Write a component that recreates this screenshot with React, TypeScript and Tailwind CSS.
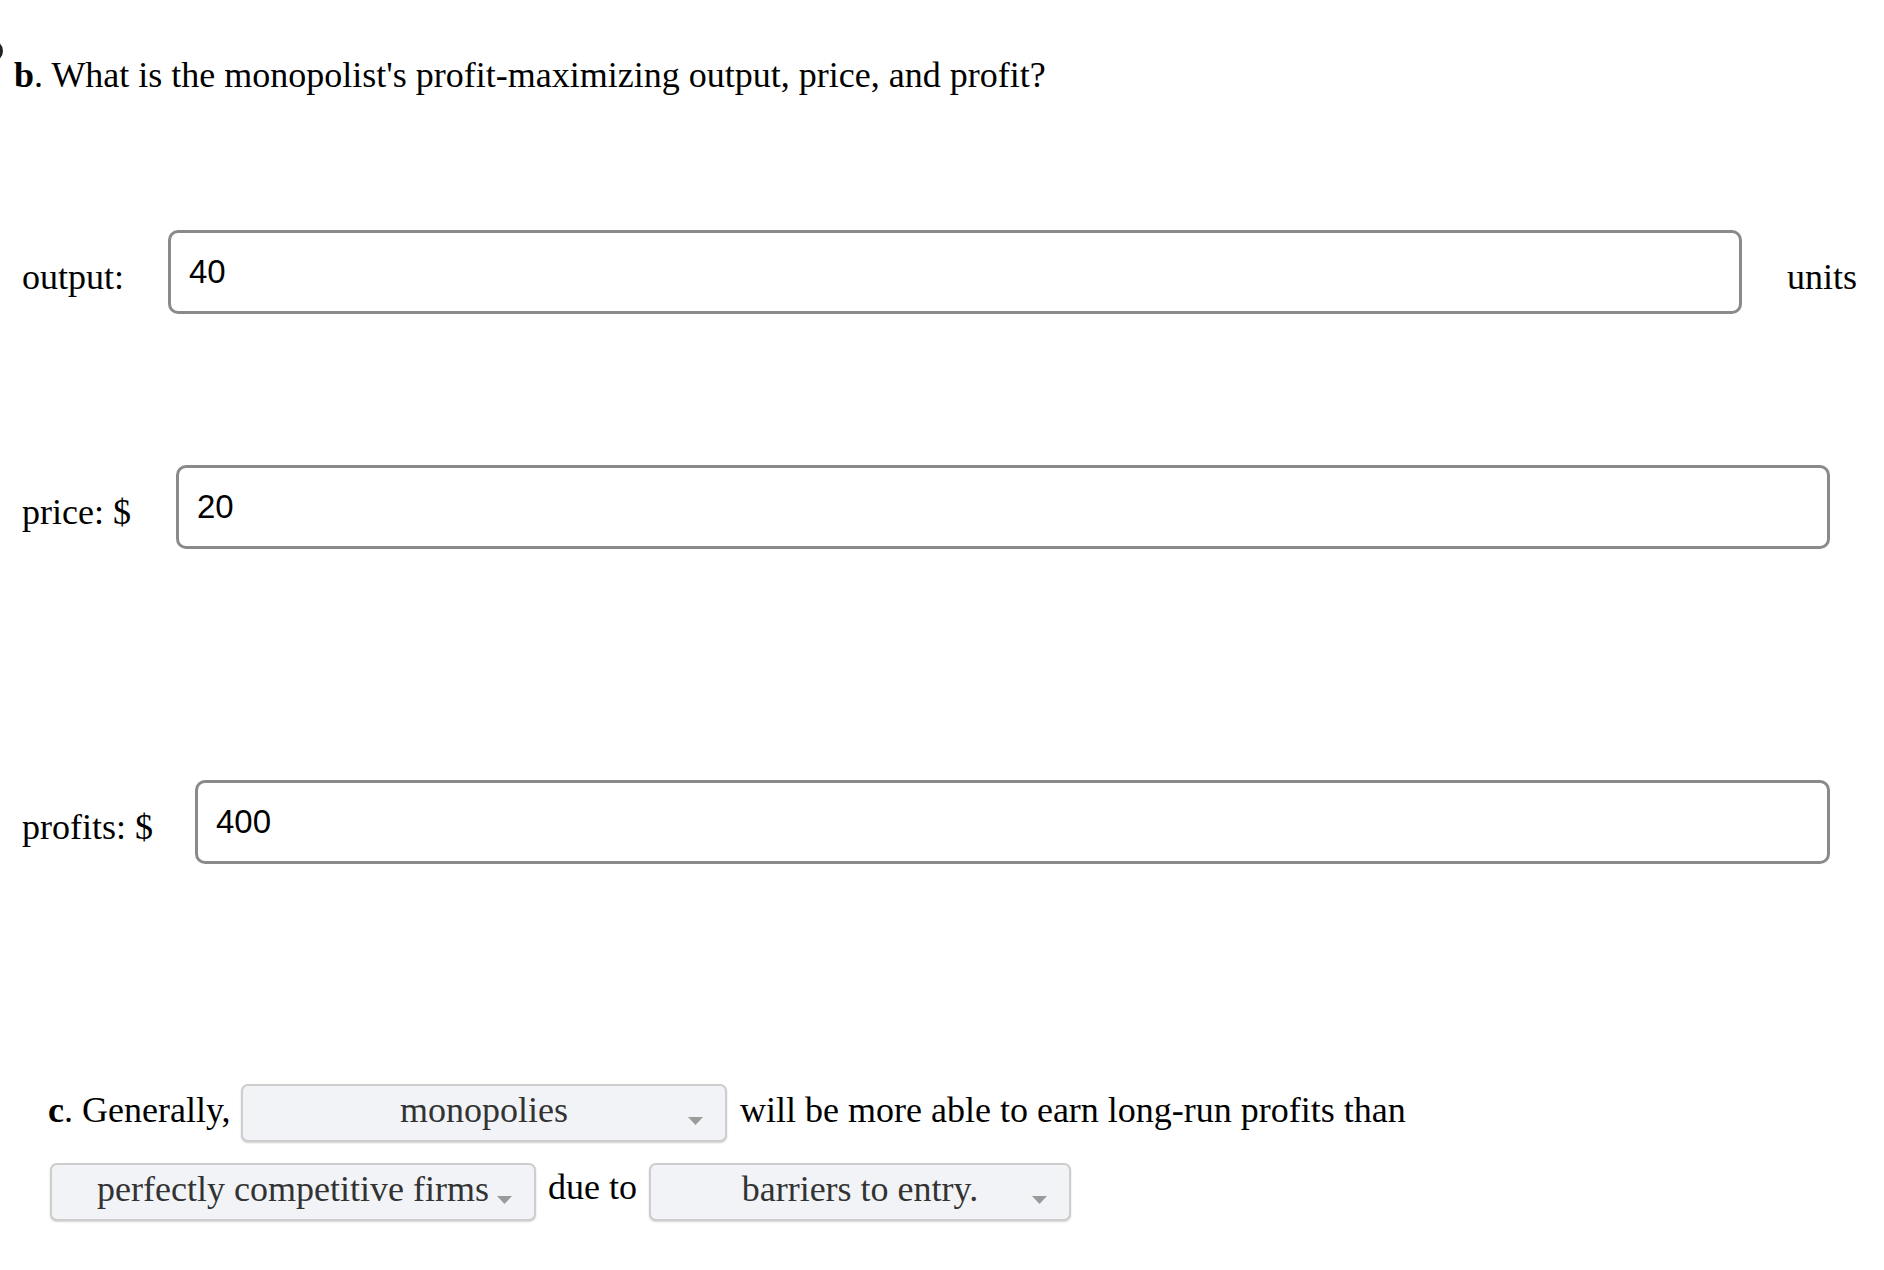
import React from 'react'

const serif = { fontFamily: '"Liberation Serif", "Times New Roman", serif' }

function Arrow() {
  return (
    <svg
      className="absolute right-[22px] top-[calc(50%+4px)]"
      width="15"
      height="8"
      viewBox="0 0 15 8"
    >
      <polygon points="0,0 15,0 7.5,8" fill="#9b9b9b" />
    </svg>
  )
}

function FakeSelect({ label, width }: { label: string; width: string }) {
  return (
    <div
      className={`relative flex h-[58px] ${width} shrink-0 items-center justify-center rounded-[7px] border-2 border-[#cdcdcd] bg-[#f2f3f7] pb-[6px] text-[36px] text-[#333333] shadow-[0_1px_2px_rgba(0,0,0,0.18)]`}
    >
      <span className="leading-normal">{label}</span>
      <Arrow />
    </div>
  )
}

function NumberField({ value }: { value: string }) {
  return (
    <input
      readOnly
      defaultValue={value}
      className="h-[84px] min-w-0 flex-1 rounded-[10px] border-[3px] border-[#8a8a8a] bg-white pl-[18px] text-[33px] text-black outline-none"
      style={{ fontFamily: '"Liberation Sans", Arial, Helvetica, sans-serif' }}
    />
  )
}

export default function App() {
  return (
    <div className="relative min-h-[1270px] w-full overflow-hidden bg-white text-[36px] text-black" style={serif}>
      {/* cut-off marker at the left edge */}
      <span className="absolute left-[-19px] top-[40px] h-[22px] w-[22px] rounded-full border-[3px] border-[#222]" />

      {/* Part b */}
      <p className="pl-[14px] pt-[48px] leading-normal">
        <span className="font-bold">b</span>. What is the monopolist's profit-maximizing output, price, and profit?
      </p>

      <div className="mt-[128px] flex h-[84px] items-center pl-[22px] pr-[27px]">
        <span className="w-[146px] shrink-0 pt-[10px] leading-normal">output:</span>
        <NumberField value="40" />
        <span className="ml-[45px] shrink-0 pt-[10px] leading-normal">units</span>
      </div>

      <div className="mt-[151px] flex h-[84px] items-center pl-[22px] pr-[54px]">
        <span className="w-[154px] shrink-0 pt-[10px] leading-normal">price: $</span>
        <NumberField value="20" />
      </div>

      <div className="mt-[231px] flex h-[84px] items-center pl-[22px] pr-[54px]">
        <span className="w-[173px] shrink-0 pt-[10px] leading-normal">profits: $</span>
        <NumberField value="400" />
      </div>

      {/* Part c */}
      <div className="mt-[220px] flex h-[58px] items-center pl-[48px]">
        <span className="w-[193px] shrink-0 pb-[6px] leading-normal">
          <span className="font-bold">c</span>. Generally,
        </span>
        <FakeSelect label="monopolies" width="w-[486px]" />
        <span className="ml-[13px] pb-[6px] leading-normal">will be more able to earn long-run profits than</span>
      </div>

      <div className="mt-[21px] flex h-[58px] items-center gap-[12px] pl-[50px]">
        <FakeSelect label="perfectly competitive firms" width="w-[486px]" />
        <span className="pb-[10px] leading-normal">due to</span>
        <FakeSelect label="barriers to entry." width="w-[422px]" />
      </div>
    </div>
  )
}
